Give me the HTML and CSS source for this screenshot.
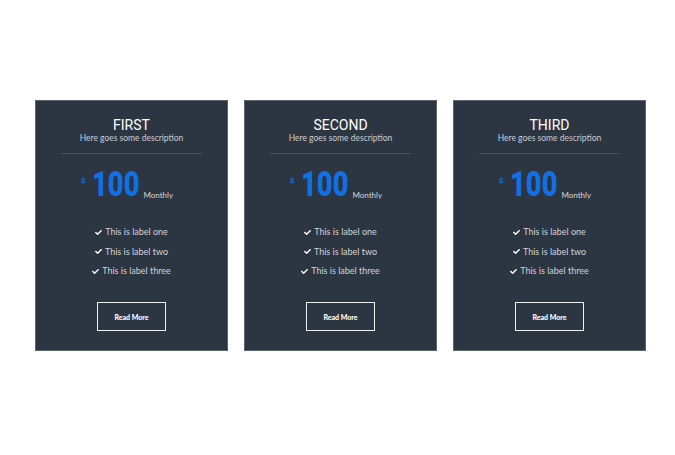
FILE: index.html
```html
<!DOCTYPE html>
<html>
<head>
<meta charset="utf-8">
<link rel="stylesheet" href="styles.css">
</head>
<body>
<div class="plans">
  <div class="card">
    <div class="title">FIRST</div>
    <div class="desc">Here goes some description</div>
    <div class="rule"></div>
    <div class="price"><span class="cur">$</span><span class="amount">100</span><span class="per">Monthly</span></div>
    <ul class="labels">
      <li><svg class="chk" viewBox="0 0 512 512"><path d="M173.9 439.4l-166.4-166.4c-10-10-10-26.2 0-36.2l36.2-36.2c10-10 26.2-10 36.2 0L192 312.7 432.1 72.6c10-10 26.2-10 36.2 0l36.2 36.2c10 10 10 26.2 0 36.2l-294.4 294.4c-10 10-26.2 10-36.2 0z"/></svg>This is label one</li>
      <li><svg class="chk" viewBox="0 0 512 512"><path d="M173.9 439.4l-166.4-166.4c-10-10-10-26.2 0-36.2l36.2-36.2c10-10 26.2-10 36.2 0L192 312.7 432.1 72.6c10-10 26.2-10 36.2 0l36.2 36.2c10 10 10 26.2 0 36.2l-294.4 294.4c-10 10-26.2 10-36.2 0z"/></svg>This is label two</li>
      <li><svg class="chk" viewBox="0 0 512 512"><path d="M173.9 439.4l-166.4-166.4c-10-10-10-26.2 0-36.2l36.2-36.2c10-10 26.2-10 36.2 0L192 312.7 432.1 72.6c10-10 26.2-10 36.2 0l36.2 36.2c10 10 10 26.2 0 36.2l-294.4 294.4c-10 10-26.2 10-36.2 0z"/></svg>This is label three</li>
    </ul>
    <a class="btn">Read More</a>
  </div>
  <div class="card">
    <div class="title">SECOND</div>
    <div class="desc">Here goes some description</div>
    <div class="rule"></div>
    <div class="price"><span class="cur">$</span><span class="amount">100</span><span class="per">Monthly</span></div>
    <ul class="labels">
      <li><svg class="chk" viewBox="0 0 512 512"><path d="M173.9 439.4l-166.4-166.4c-10-10-10-26.2 0-36.2l36.2-36.2c10-10 26.2-10 36.2 0L192 312.7 432.1 72.6c10-10 26.2-10 36.2 0l36.2 36.2c10 10 10 26.2 0 36.2l-294.4 294.4c-10 10-26.2 10-36.2 0z"/></svg>This is label one</li>
      <li><svg class="chk" viewBox="0 0 512 512"><path d="M173.9 439.4l-166.4-166.4c-10-10-10-26.2 0-36.2l36.2-36.2c10-10 26.2-10 36.2 0L192 312.7 432.1 72.6c10-10 26.2-10 36.2 0l36.2 36.2c10 10 10 26.2 0 36.2l-294.4 294.4c-10 10-26.2 10-36.2 0z"/></svg>This is label two</li>
      <li><svg class="chk" viewBox="0 0 512 512"><path d="M173.9 439.4l-166.4-166.4c-10-10-10-26.2 0-36.2l36.2-36.2c10-10 26.2-10 36.2 0L192 312.7 432.1 72.6c10-10 26.2-10 36.2 0l36.2 36.2c10 10 10 26.2 0 36.2l-294.4 294.4c-10 10-26.2 10-36.2 0z"/></svg>This is label three</li>
    </ul>
    <a class="btn">Read More</a>
  </div>
  <div class="card">
    <div class="title">THIRD</div>
    <div class="desc">Here goes some description</div>
    <div class="rule"></div>
    <div class="price"><span class="cur">$</span><span class="amount">100</span><span class="per">Monthly</span></div>
    <ul class="labels">
      <li><svg class="chk" viewBox="0 0 512 512"><path d="M173.9 439.4l-166.4-166.4c-10-10-10-26.2 0-36.2l36.2-36.2c10-10 26.2-10 36.2 0L192 312.7 432.1 72.6c10-10 26.2-10 36.2 0l36.2 36.2c10 10 10 26.2 0 36.2l-294.4 294.4c-10 10-26.2 10-36.2 0z"/></svg>This is label one</li>
      <li><svg class="chk" viewBox="0 0 512 512"><path d="M173.9 439.4l-166.4-166.4c-10-10-10-26.2 0-36.2l36.2-36.2c10-10 26.2-10 36.2 0L192 312.7 432.1 72.6c10-10 26.2-10 36.2 0l36.2 36.2c10 10 10 26.2 0 36.2l-294.4 294.4c-10 10-26.2 10-36.2 0z"/></svg>This is label two</li>
      <li><svg class="chk" viewBox="0 0 512 512"><path d="M173.9 439.4l-166.4-166.4c-10-10-10-26.2 0-36.2l36.2-36.2c10-10 26.2-10 36.2 0L192 312.7 432.1 72.6c10-10 26.2-10 36.2 0l36.2 36.2c10 10 10 26.2 0 36.2l-294.4 294.4c-10 10-26.2 10-36.2 0z"/></svg>This is label three</li>
    </ul>
    <a class="btn">Read More</a>
  </div>
</div>
</body>
</html>
```

FILE: styles.css
```css
html, body {
  margin: 0;
  padding: 0;
  background: #ffffff;
}
.plans {
  display: flex;
  gap: 16px;
  padding: 100px 0 0 35px;
}
.card {
  box-sizing: border-box;
  width: 193px;
  height: 251px;
  background: #2c3542;
  border: 1px solid #5b6470;
  display: flex;
  flex-direction: column;
  align-items: center;
  padding-top: 16px;
}
.title {
  font-family: Roboto, "Liberation Sans", sans-serif;
  font-size: 14px;
  line-height: 16px;
  color: #ffffff;
}
.desc {
  font-family: Lato, "Liberation Sans", sans-serif;
  font-size: 8.5px;
  line-height: 11px;
  color: #c9cdd3;
  margin-top: 0;
}
.rule {
  width: 141px;
  height: 1px;
  background: #465161;
  margin-top: 9px;
}
.price {
  display: flex;
  align-items: flex-end;
  margin-top: 16px;
  height: 30px;
  margin-left: -9px;
}
.cur {
  font-family: Roboto, sans-serif;
  font-weight: 700;
  font-size: 8px;
  color: #1170e4;
  align-self: flex-start;
  margin-top: 6px;
  margin-right: 6px;
}
.amount {
  display: inline-block;
  font-family: Roboto, sans-serif;
  font-weight: 900;
  font-size: 35px;
  line-height: 30px;
  color: #1170e4;
  width: 46px;
  transform: scaleX(0.78);
  transform-origin: left center;
  white-space: nowrap;
}
.per {
  font-family: Lato, sans-serif;
  font-size: 8px;
  line-height: 10px;
  color: #d5d9de;
  margin-left: 6px;
}
.labels {
  list-style: none;
  margin: 26px 0 0;
  padding: 0;
  display: flex;
  flex-direction: column;
  align-items: center;
  gap: 7.5px;
}
.labels li {
  font-family: Lato, sans-serif;
  font-size: 9px;
  line-height: 12px;
  color: #d0d4da;
  display: flex;
  align-items: center;
}
.chk {
  width: 7px;
  height: 7px;
  margin-right: 3px;
  fill: #ffffff;
}
.btn {
  margin-top: 25px;
  box-sizing: border-box;
  width: 69px;
  height: 29px;
  border: 1.5px solid #eef0f2;
  display: flex;
  align-items: center;
  justify-content: center;
  font-family: Lato, sans-serif;
  font-weight: 900;
  font-size: 7px;
  color: #ffffff;
}
```
